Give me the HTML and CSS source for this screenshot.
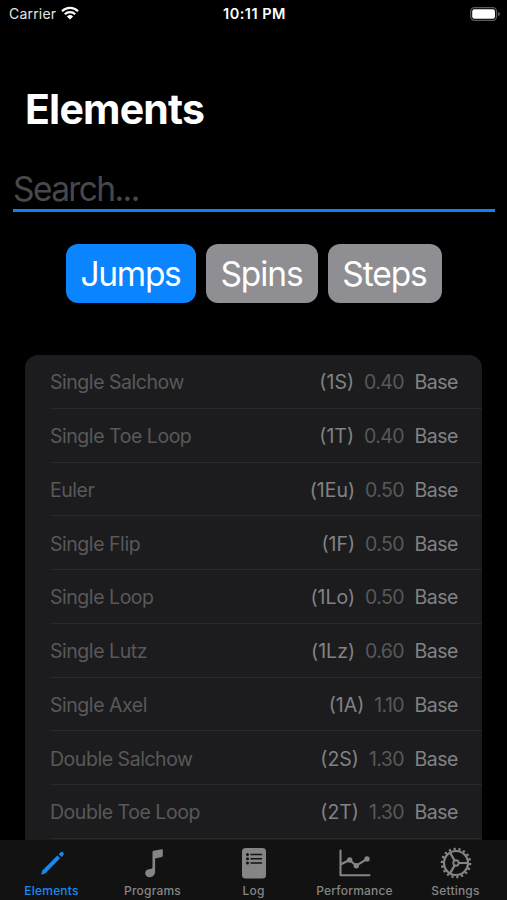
FILE: index.html
```html
<!DOCTYPE html>
<html lang="en">
<head>
    <meta charset="UTF-8">
    <meta name="viewport" content="width=device-width, initial-scale=1.0">
    <title>Elements</title>
    <link rel="stylesheet" href="styles.css">
</head>
<body>
    <div class="app">
        <header class="status-bar">
            <div class="carrier">
                <span>Carrier</span>
                <svg class="wifi" viewBox="0 0 18 14" width="18" height="14">
                    <path d="M1 5.2a11.5 11.5 0 0 1 16 0M3.8 8.2a7.4 7.4 0 0 1 10.4 0" fill="none" stroke="#fff" stroke-width="2.2"/>
                    <path d="M9 13.4L5.9 10.4a4.5 4.5 0 0 1 6.2 0z" fill="#fff"/>
                </svg>
            </div>
            <div class="time">10:11 PM</div>
            <div class="battery">
                <svg viewBox="0 0 30 14" width="30" height="14">
                    <rect x="0.7" y="0.7" width="25.8" height="12.6" rx="3.8" fill="none" stroke="#5c5c5f" stroke-width="1.3"/>
                    <rect x="2.2" y="2.2" width="22.8" height="9.6" rx="2.2" fill="#fff"/>
                    <path d="M28 4.8q2 .7 2 2.2t-2 2.2z" fill="#5c5c5f"/>
                </svg>
            </div>
        </header>

        <main class="content">
            <h1>Elements</h1>
            <input type="text" class="search" placeholder="Search...">
            <div class="filters">
                <button type="button" class="filter jumps active">Jumps</button>
                <button type="button" class="filter spins">Spins</button>
                <button type="button" class="filter steps">Steps</button>
            </div>
            <ul class="list">
                <li><span class="name">Single Salchow</span><span class="code">(1S)</span><span class="value">0.40</span><span class="base">Base</span></li>
                <li><span class="name">Single Toe Loop</span><span class="code">(1T)</span><span class="value">0.40</span><span class="base">Base</span></li>
                <li><span class="name">Euler</span><span class="code">(1Eu)</span><span class="value">0.50</span><span class="base">Base</span></li>
                <li><span class="name">Single Flip</span><span class="code">(1F)</span><span class="value">0.50</span><span class="base">Base</span></li>
                <li><span class="name">Single Loop</span><span class="code">(1Lo)</span><span class="value">0.50</span><span class="base">Base</span></li>
                <li><span class="name">Single Lutz</span><span class="code">(1Lz)</span><span class="value">0.60</span><span class="base">Base</span></li>
                <li><span class="name">Single Axel</span><span class="code">(1A)</span><span class="value">1.10</span><span class="base">Base</span></li>
                <li><span class="name">Double Salchow</span><span class="code">(2S)</span><span class="value">1.30</span><span class="base">Base</span></li>
                <li><span class="name">Double Toe Loop</span><span class="code">(2T)</span><span class="value">1.30</span><span class="base">Base</span></li>
            </ul>
        </main>

        <nav class="tab-bar">
            <a class="tab active">
                <svg viewBox="0 0 32 32" width="32" height="32">
                    <path d="M5.2 27.8l1-4L21.3 8.4l2.800 2.800L9.200 26.600z" fill="currentColor"/>
                    <path d="M22.700 7.200l1.700-1.700a1.900 1.900 0 0 1 2.800 2.800L25.500 10z" fill="currentColor"/>
                </svg>
                <span>Elements</span>
            </a>
            <a class="tab">
                <svg viewBox="0 0 32 32" width="32" height="32">
                    <path d="M15.500 5q0-1 .9-1.200L24.700 2.200q1.100-.2 1.100.8v5.700q0 1-.9 1.200l-6.800 1.500V24.500c0 3.400-2.200 5.700-5.400 5.700-2.600 0-4.500-1.500-4.500-3.900 0-2.500 1.900-3.800 4.500-4.200 2-.3 2.800-.7 2.800-2.200z" fill="currentColor"/>
                </svg>
                <span>Programs</span>
            </a>
            <a class="tab">
                <svg viewBox="0 0 32 32" width="32" height="32">
                    <rect x="4" y="1" width="24" height="30.500" rx="3.500" fill="currentColor"/>
                    <path d="M13 7.500h10.500M13 11.800h10.500M13 16.100h10.500" stroke="#121212" stroke-width="1.500" stroke-linecap="round"/>
                    <g fill="#121212">
                        <circle cx="9.500" cy="7.500" r="1.500"/>
                        <circle cx="9.500" cy="11.800" r="1.500"/>
                        <circle cx="9.500" cy="16.100" r="1.500"/>
                    </g>
                </svg>
                <span>Log</span>
            </a>
            <a class="tab">
                <svg viewBox="0 0 32 32" width="32" height="32">
                    <path d="M1.500 3.500v24.700h29M2.500 17l8-4 6.800 5.700 10.800-6.800" fill="none" stroke="currentColor" stroke-width="2.100" stroke-linecap="round" stroke-linejoin="round"/>
                    <g fill="currentColor">
                        <circle cx="10.700" cy="13" r="2.700"/>
                        <circle cx="17.300" cy="18.700" r="2.700"/>
                        <circle cx="28" cy="11.900" r="2.700"/>
                    </g>
                </svg>
                <span>Performance</span>
            </a>
            <a class="tab">
                <svg viewBox="0 0 32 32" width="32" height="32">
                    <g fill="none" stroke="currentColor">
                        <circle cx="16" cy="16" r="12" stroke-width="2.200"/>
                        <circle cx="16" cy="16" r="14" stroke-width="2.600" pathLength="36" stroke-dasharray="0.900 1.100"/>
                        <circle cx="16" cy="16" r="2.700" stroke-width="1.900"/>
                        <path d="M19 16h9M14.500 13.400L10 5.600M14.500 18.600L10 26.400" stroke-width="2.200"/>
                    </g>
                </svg>
                <span>Settings</span>
            </a>
        </nav>
    </div>
</body>
</html>
```
FILE: styles.css
```css
/* Global Styles */
* {
    box-sizing: border-box;
}

body {
    font-family: Inter, "Liberation Sans", sans-serif;
    background-color: #000;
    color: #fff;
    margin: 0;
}

.app {
    display: flex;
    flex-direction: column;
    height: 100vh;
    overflow: hidden;
}

/* Status bar */
.status-bar {
    display: grid;
    grid-template-columns: 1fr auto 1fr;
    align-items: center;
    height: 27px;
    padding: 0 7px 0 9px;
    font-size: 14px;
}

.carrier {
    display: flex;
    align-items: center;
    gap: 5px;
    color: #e6e6e6;
    letter-spacing: 0.2px;
}

.wifi {
    display: block;
    margin-top: -2px;
}

.time {
    font-weight: 600;
    font-size: 14.5px;
    letter-spacing: 0.5px;
}

.battery {
    display: flex;
    justify-content: flex-end;
}

/* Content */
.content {
    flex: 1;
    min-height: 0;
    overflow: hidden;
}

h1 {
    margin: 57px 0 0 25px;
    font-size: 41px;
    line-height: 50px;
    font-weight: 700;
    letter-spacing: -0.8px;
}

.search {
    display: block;
    width: 482px;
    height: 43px;
    margin: 35px 0 0 13px;
    padding: 0;
    background: none;
    border: none;
    border-bottom: 3px solid #0f82f2;
    border-radius: 0;
    outline: none;
    color: #fff;
    font-family: inherit;
    font-size: 33.5px;
    letter-spacing: -1.6px;
}

.search::placeholder {
    color: #48484a;
}

.filters {
    display: flex;
    justify-content: center;
    gap: 10px;
    margin-top: 32px;
}

.filter {
    height: 59px;
    padding: 1px 0 0;
    border: none;
    border-radius: 12px;
    background-color: #8e8e93;
    color: #fff;
    font-family: inherit;
    font-size: 33.5px;
    letter-spacing: -1.1px;
}

.filter.active {
    background-color: #0a84ff;
    letter-spacing: -1.3px;
}

.jumps {
    width: 130px;
}

.spins {
    width: 112px;
}

.steps {
    width: 114px;
}

/* Elements list */
.list {
    list-style: none;
    width: 457px;
    margin: 52px 0 0 25px;
    padding: 0 0 20px 25px;
    border-radius: 13px;
    background-color: #1c1c1e;
    font-size: 19.5px;
    letter-spacing: -0.46px;
}

.list li {
    display: flex;
    align-items: center;
    height: 53.75px;
    padding: 2px 24px 0 0;
    border-bottom: 1px solid #29292b;
}

.name {
    flex: 1;
    color: #58585a;
}

.code,
.base {
    color: #828284;
}

.code {
    letter-spacing: 0;
}

.value {
    margin: 0 10.5px 0 10px;
    color: #58585a;
    letter-spacing: -0.6px;
}

/* Tab bar */
.tab-bar {
    display: grid;
    grid-template-columns: repeat(5, 101px);
    justify-content: center;
    height: 60px;
    background-color: #121212;
}

.tab {
    display: flex;
    flex-direction: column;
    align-items: center;
    padding-top: 7px;
    color: #858585;
    font-size: 12px;
    font-weight: 500;
    line-height: 16px;
    letter-spacing: 0.2px;
}

.tab svg {
    display: block;
    margin-bottom: 4px;
}

.tab.active {
    color: #148af5;
}
```
